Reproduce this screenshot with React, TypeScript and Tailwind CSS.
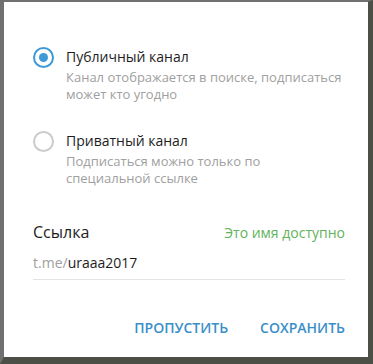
import React from "react";

function Radio({ checked }: { checked: boolean }) {
  return (
    <div
      className={
        checked
          ? "w-[21px] h-[21px] rounded-full border-2 border-[#3d9ad7] flex items-center justify-center shrink-0"
          : "w-[21px] h-[21px] rounded-full border-2 border-[#cbcbcb] flex items-center justify-center shrink-0"
      }
    >
      {checked && <div className="w-[9px] h-[9px] rounded-full bg-[#3d9ad7]" />}
    </div>
  );
}

function Option({
  checked,
  title,
  lines,
  className,
}: {
  checked: boolean;
  title: string;
  lines: string[];
  className?: string;
}) {
  return (
    <div className={"flex items-start gap-[12px] " + (className ?? "")}>
      <div className="pt-0">
        <Radio checked={checked} />
      </div>
      <div className="flex flex-col">
        <div className="text-[14px] leading-[20px] text-[#1d1d1d]">{title}</div>
        <div className="mt-[2px] text-[13px] leading-[17px] text-[#a0a0a0]">
          {lines.map((l, i) => (
            <div key={i}>{l}</div>
          ))}
        </div>
      </div>
    </div>
  );
}

export default function App() {
  return (
    <div className="w-[373px] h-[364px] border-l-4 border-t-2 border-r-[5px] border-b-[7px] border-l-[#707070] border-t-[#707070] border-r-[#4c4f45] border-b-[#4c4f45] bg-white font-['Open_Sans',sans-serif] flex flex-col pl-[29px] pr-[23px] pt-[45px]">
      <Option
        checked
        title="Публичный канал"
        lines={["Канал отображается в поиске, подписаться", "может кто угодно"]}
      />
      <Option
        className="mt-[28px]"
        checked={false}
        title="Приватный канал"
        lines={["Подписаться можно только по", "специальной ссылке"]}
      />
      <div className="mt-[34px] flex items-baseline justify-between">
        <div className="text-[16px] leading-[22px] text-[#1d1d1d]">Ссылка</div>
        <div className="text-[14px] leading-[17px] text-[#5fb35a]">Это имя доступно</div>
      </div>
      <div className="mt-[10px] pb-[6px] border-b border-[#e3e3e3] text-[14px] leading-[20px]">
        <span className="text-[#a0a0a0]">t.me/</span>
        <span className="text-[#1d1d1d]">uraaa2017</span>
      </div>
      <div className="mt-[38px] flex justify-end gap-[32px] text-[14px] leading-[20px] font-semibold text-[#3b8fc8] uppercase">
        <span>Пропустить</span>
        <span>Сохранить</span>
      </div>
    </div>
  );
}
